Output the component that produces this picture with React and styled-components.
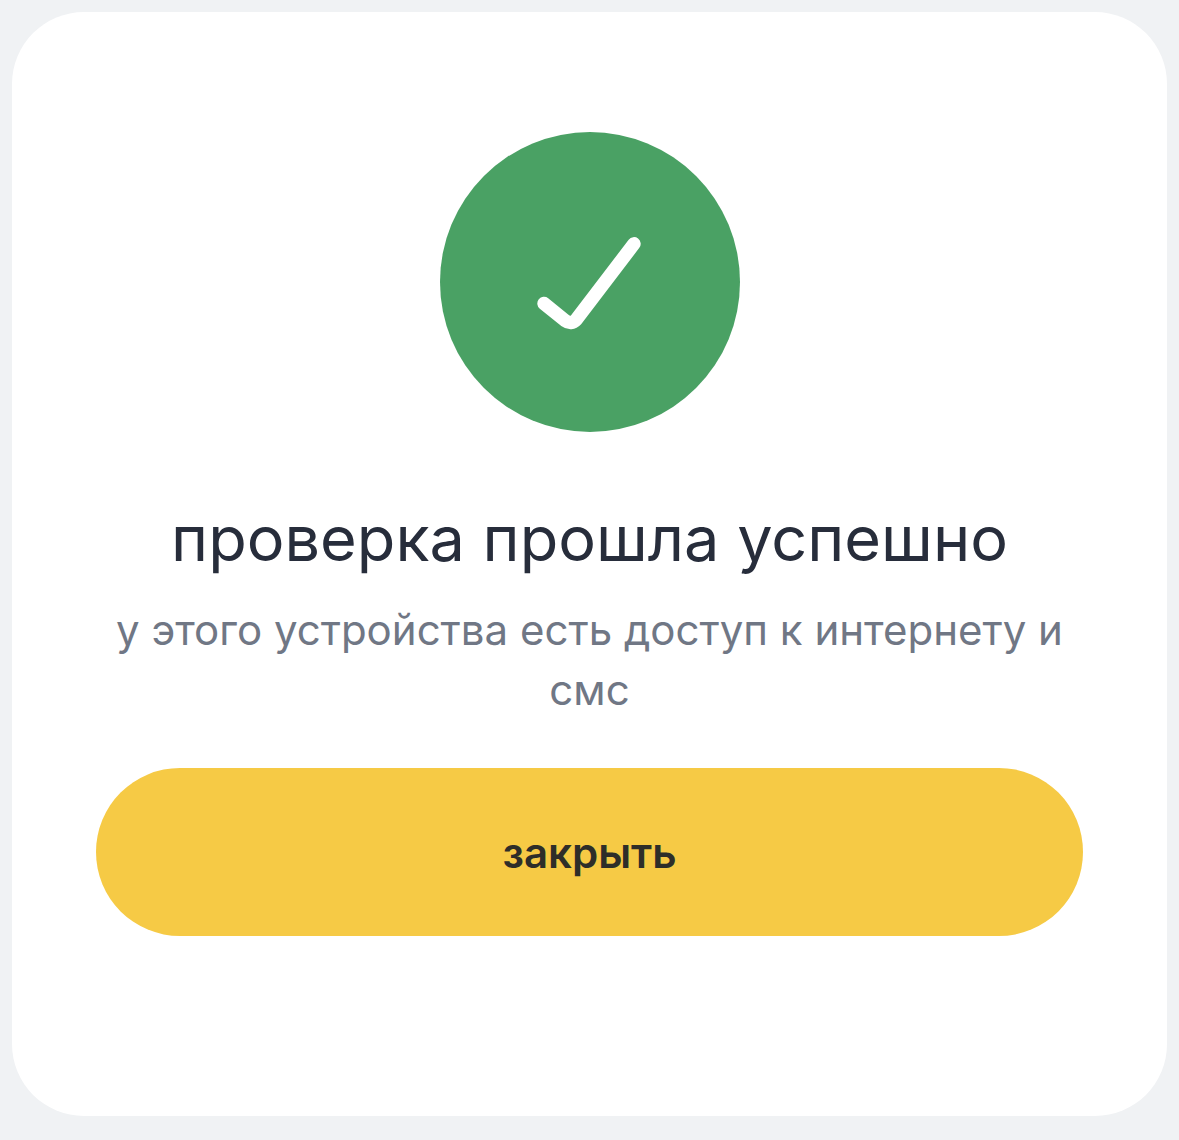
import React, { useState } from 'react';
import styled, { createGlobalStyle } from 'styled-components';

const GlobalStyle = createGlobalStyle`
	* {
		box-sizing: border-box;
	}
	body {
		margin: 0;
		background: #f0f2f4;
		font-family: Inter, 'Liberation Sans', sans-serif;
	}
`;

const Page = styled.main`
	min-height: 100vh;
	padding: 12px 12px 24px;
	display: flex;
`;

const Card = styled.section`
	flex: 1;
	display: flex;
	flex-direction: column;
	align-items: center;
	padding: 120px 84px 180px;
	border-radius: 72px;
	background: #ffffff;
	text-align: center;
`;

const StatusBadge = styled.div`
	width: 300px;
	height: 300px;
	border-radius: 50%;
	background: #4aa164;
	svg {
		display: block;
		width: 100%;
		height: 100%;
	}
`;

const Title = styled.h1`
	margin: 60px 0 0;
	color: #272d3b;
	font-size: 63px;
	font-weight: 400;
	line-height: 92px;
`;

const Description = styled.p`
	margin: 16px 0 0;
	color: #707785;
	font-size: 42px;
	font-weight: 400;
	line-height: 60px;
`;

const CloseButton = styled.button`
	width: 100%;
	height: 168px;
	margin-top: 48px;
	border: 0;
	border-radius: 84px;
	background: #f6ca45;
	color: #2e2e29;
	font-family: inherit;
	font-size: 42px;
	font-weight: 600;
	cursor: pointer;
`;

const CheckMark = () => (
	<svg viewBox="0 0 300 300" fill="none" aria-hidden="true">
		<path
			d="M104 171.5L125.2 188.6Q131.2 193 136.2 187.6L194 111.8"
			stroke="#ffffff"
			strokeWidth="13.4"
			strokeLinecap="round"
			strokeLinejoin="round"
		/>
	</svg>
);

const App = () => {
	const [open, setOpen] = useState(true);
	return (
		<>
			<GlobalStyle />
			<Page>
				{open && (
					<Card>
						<StatusBadge>
							<CheckMark />
						</StatusBadge>
						<Title>проверка прошла успешно</Title>
						<Description>у этого устройства есть доступ к интернету и смс</Description>
						<CloseButton type="button" onClick={() => setOpen(false)}>
							закрыть
						</CloseButton>
					</Card>
				)}
			</Page>
		</>
	);
};

export default App;
